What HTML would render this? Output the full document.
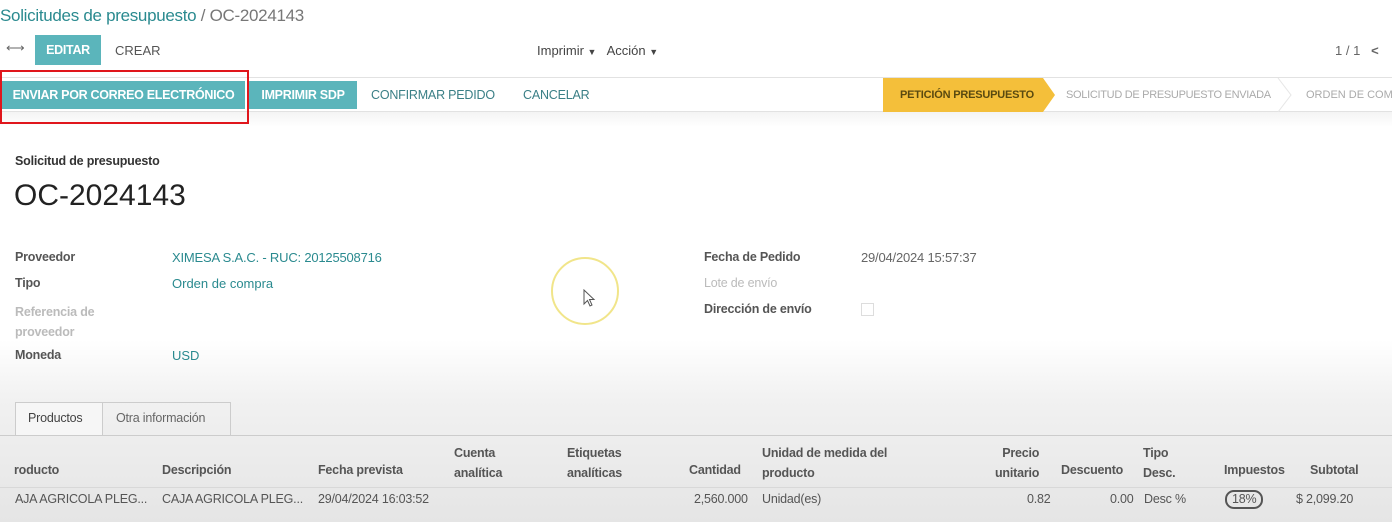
<!DOCTYPE html>
<html><head><meta charset="utf-8"><style>
*{margin:0;padding:0;box-sizing:border-box}
body{width:1392px;height:522px;overflow:hidden;position:relative;font-family:"Liberation Sans",sans-serif;color:#444;
background:linear-gradient(#fff 0,#fff 340px,#f1f1f1 400px,#e5e5e5 522px)}
.a{position:absolute;white-space:nowrap}
.t{color:#2a8a8f}
.b{font-weight:bold}
.btn{position:absolute;background:#5bb5bb;color:#fff;font-weight:bold;font-size:12.5px;display:flex;align-items:center;justify-content:center;letter-spacing:-.3px}
.f{font-size:13px}
.h{font-size:12.5px;font-weight:bold;color:#555;letter-spacing:-.2px}
.d{font-size:12.5px;color:#555;letter-spacing:-.2px}
</style></head><body>
<div class="a t" style="left:0;top:6px;font-size:17px;letter-spacing:-.3px">Solicitudes de presupuesto <span style="color:#777">/ OC-2024143</span></div>
<div class="a" style="left:6px;top:40px;font-size:13px;color:#666">⟷</div>
<div class="btn" style="left:35px;top:35px;width:66px;height:30px">EDITAR</div>
<div class="a" style="left:115px;top:43px;font-size:13px;color:#555">CREAR</div>
<div class="a" style="left:537px;top:43px;font-size:13px;color:#444">Imprimir <span style="font-size:9px">▼</span>&nbsp;&nbsp; Acción <span style="font-size:9px">▼</span></div>
<div class="a" style="left:1335px;top:43px;font-size:13px;color:#666">1 / 1 &nbsp;&nbsp;<b>&lt;</b></div>
<div class="a" style="left:0;top:77px;width:1392px;height:1px;background:#e2e2e2"></div>
<div class="a" style="left:0;top:111px;width:1392px;height:16px;background:linear-gradient(#f4f4f4,#fff);border-top:1px solid #e2e2e2"></div>
<div class="btn" style="left:2px;top:81px;width:243px;height:28px">ENVIAR POR CORREO ELECTRÓNICO</div>
<div class="btn" style="left:249px;top:81px;width:108px;height:28px">IMPRIMIR SDP</div>
<div class="a" style="left:0;top:70px;width:249px;height:54px;border:2.5px solid #e0161c"></div>
<div class="a" style="left:371px;top:88px;font-size:12.5px;color:#3a7f86;letter-spacing:-.2px">CONFIRMAR PEDIDO</div>
<div class="a" style="left:523px;top:88px;font-size:12.5px;color:#3a7f86;letter-spacing:-.2px">CANCELAR</div>
<svg class="a" style="left:883px;top:78px" width="509" height="34"><polygon points="0,0 160,0 172,17 160,34 0,34" fill="#f4bf3a"/><polyline points="395,0 408,17 395,34" fill="none" stroke="#e6e6e6"/></svg>
<div class="a b" style="left:900px;top:89px;font-size:11px;color:#5a4a10;letter-spacing:-.2px">PETICIÓN PRESUPUESTO</div>
<div class="a" style="left:1066px;top:89px;font-size:11px;color:#aaa;letter-spacing:-.3px">SOLICITUD DE PRESUPUESTO ENVIADA</div>
<div class="a" style="left:1306px;top:89px;font-size:11px;color:#aaa">ORDEN DE COMPRA</div>
<div class="a b" style="left:15px;top:154px;font-size:12.5px;color:#333;letter-spacing:-.2px">Solicitud de presupuesto</div>
<div class="a" style="left:14px;top:179px;font-size:30px;color:#222">OC-2024143</div>
<div class="a h" style="left:15px;top:250px">Proveedor</div>
<div class="a h" style="left:15px;top:276px">Tipo</div>
<div class="a h" style="left:15px;top:302px;color:#bbb;line-height:20px">Referencia de<br>proveedor</div>
<div class="a h" style="left:15px;top:348px">Moneda</div>
<div class="a t f" style="left:172px;top:250px;letter-spacing:-.2px">XIMESA S.A.C. - RUC: 20125508716</div>
<div class="a t f" style="left:172px;top:276px">Orden de compra</div>
<div class="a t f" style="left:172px;top:348px">USD</div>
<div class="a h" style="left:704px;top:250px">Fecha de Pedido</div>
<div class="a h" style="left:704px;top:276px;color:#bbb;font-weight:normal">Lote de envío</div>
<div class="a h" style="left:704px;top:302px">Dirección de envío</div>
<div class="a f" style="left:861px;top:250px;color:#666;letter-spacing:-.2px">29/04/2024 15:57:37</div>
<div class="a" style="left:861px;top:303px;width:13px;height:13px;border:1px solid #ddd"></div>
<div class="a" style="left:551px;top:257px;width:68px;height:68px;border-radius:50%;border:2px solid #f1e58a"></div>
<svg class="a" style="left:583px;top:289px" width="14" height="20"><path d="M1 1 L1 15 L4.5 11.5 L7 17 L9 16 L6.5 10.5 L11 10.5 Z" fill="#fff" stroke="#555" stroke-width="1"/></svg>
<div class="a" style="left:15px;top:402px;width:88px;height:34px;border:1px solid #ccc;border-bottom:none;background:#f6f6f6"></div>
<div class="a" style="left:103px;top:402px;width:128px;height:33px;border:1px solid #ccc;border-left:none;border-bottom:none"></div>
<div class="a" style="left:0;top:435px;width:1392px;height:1px;background:#ccc"></div>
<div class="a d" style="left:28px;top:411px;color:#444">Productos</div>
<div class="a d" style="left:116px;top:411px;color:#666">Otra información</div>
<div class="a" style="left:0;top:487px;width:1392px;height:1px;background:#d8d8d8"></div>
<div class="a h" style="left:14px;top:463px">roducto</div>
<div class="a h" style="left:162px;top:463px">Descripción</div>
<div class="a h" style="left:318px;top:463px">Fecha prevista</div>
<div class="a h" style="left:454px;top:443px;line-height:20px">Cuenta<br>analítica</div>
<div class="a h" style="left:567px;top:443px;line-height:20px">Etiquetas<br>analíticas</div>
<div class="a h" style="left:689px;top:463px">Cantidad</div>
<div class="a h" style="left:762px;top:443px;line-height:20px">Unidad de medida del<br>producto</div>
<div class="a h" style="left:995px;top:443px;line-height:20px;text-align:right">&nbsp;&nbsp;Precio<br>unitario</div>
<div class="a h" style="left:1061px;top:463px">Descuento</div>
<div class="a h" style="left:1143px;top:443px;line-height:20px">Tipo<br>Desc.</div>
<div class="a h" style="left:1224px;top:463px">Impuestos</div>
<div class="a h" style="left:1310px;top:463px">Subtotal</div>
<div class="a d" style="left:15px;top:492px">AJA AGRICOLA PLEG...</div>
<div class="a d" style="left:162px;top:492px">CAJA AGRICOLA PLEG...</div>
<div class="a d" style="left:318px;top:492px">29/04/2024 16:03:52</div>
<div class="a d" style="left:694px;top:492px">2,560.000</div>
<div class="a d" style="left:762px;top:492px">Unidad(es)</div>
<div class="a d" style="left:1027px;top:492px">0.82</div>
<div class="a d" style="left:1110px;top:492px">0.00</div>
<div class="a d" style="left:1144px;top:492px">Desc %</div>
<div class="a d" style="left:1225px;top:490px;border:2px solid #555;border-radius:9px;padding:0 5px;line-height:15px">18%</div>
<div class="a d" style="left:1296px;top:492px">$ 2,099.20</div>
</body></html>
